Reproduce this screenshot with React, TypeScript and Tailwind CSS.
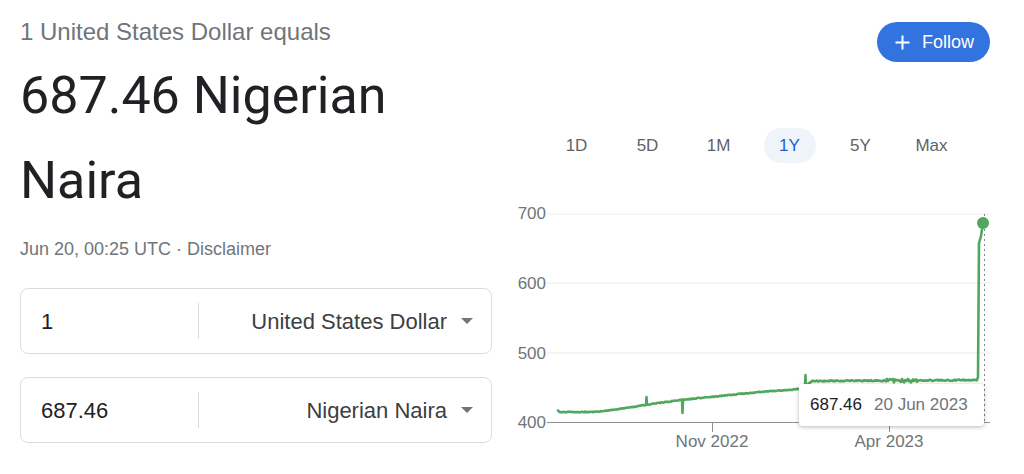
import React from 'react';

const ranges = ['1D', '5D', '1M', '1Y', '5Y', 'Max'];

// chart keypoints, local coords (svg origin = page 500,200)
const keys: [number, number][] = [
  [57, 210],
  [60, 212],
  [95, 212],
  [120, 209],
  [145, 205],
  [180, 200],
  [220, 196],
  [260, 192],
  [300, 189],
  [306, 186],
  [312, 181],
  [477, 180],
];

const spikes: Record<number, number> = { 146: 197, 182: 213, 305: 175 };

const rnd = (i: number) => {
  const s = Math.sin(i * 127.1) * 43758.5453;
  return s - Math.floor(s) - 0.5;
};

const baseY = (x: number) => {
  for (let i = 0; i < keys.length - 1; i++) {
    const [x0, y0] = keys[i];
    const [x1, y1] = keys[i + 1];
    if (x >= x0 && x <= x1) return y0 + ((y1 - y0) * (x - x0)) / (x1 - x0);
  }
  return keys[keys.length - 1][1];
};

const buildPath = () => {
  const pts: string[] = [];
  for (let x = 57; x <= 477; x++) {
    const amp = x > 385 && x < 418 ? 4 : x > 312 ? 1.2 : 0.8;
    const y = baseY(x) + rnd(x) * amp;
    pts.push(`${x},${y.toFixed(1)}`);
    if (spikes[x] !== undefined) {
      pts.push(`${x + 0.5},${spikes[x]}`);
      pts.push(`${x + 1},${baseY(x + 1).toFixed(1)}`);
    }
  }
  pts.push('478,177', '479,43', '481,36', '483,23');
  return 'M' + pts.join(' L');
};

const linePath = buildPath();

const Caret = () => (
  <svg width="14" height="8" viewBox="0 0 14 8" className="shrink-0">
    <path d="M1 1 L7 7 L13 1 Z" fill="#70757a" />
  </svg>
);

const ConvertBox = ({ value, currency, className }: { value: string; currency: string; className?: string }) => (
  <div className={`w-[472px] h-[66px] border border-[#dadce0] rounded-lg flex items-center ${className ?? ''}`}>
    <div className="w-[177px] pl-5 text-[22px] text-[#202124]">{value}</div>
    <div className="w-px h-9 bg-[#dadce0]" />
    <div className="flex-1 flex justify-end items-center gap-[13px] pr-[17px] text-[22px] text-[#3c4043]">
      <span>{currency}</span>
      <Caret />
    </div>
  </div>
);

const Chart = () => (
  <div className="relative mt-[37px] h-[274px] w-[524px]">
    <svg width="524" height="274" viewBox="0 0 524 274" className="block">
      {[14, 83, 153].map((y) => (
        <line key={y} x1="47" x2="490" y1={y} y2={y} stroke="#ececec" strokeWidth="1" />
      ))}
      <line x1="47" x2="490" y1="222.5" y2="222.5" stroke="#8c9196" strokeWidth="1" />
      <line x1="212.5" x2="212.5" y1="223" y2="232" stroke="#8c9196" strokeWidth="1" />
      <line x1="389.5" x2="389.5" y1="223" y2="232" stroke="#8c9196" strokeWidth="1" />
      <g fill="#70757a" fontSize="17" fontFamily="'Liberation Sans', Arial, sans-serif">
        <text x="46" y="19" textAnchor="end">700</text>
        <text x="46" y="89" textAnchor="end">600</text>
        <text x="46" y="159" textAnchor="end">500</text>
        <text x="46" y="228" textAnchor="end">400</text>
        <text x="212" y="247" textAnchor="middle">Nov 2022</text>
        <text x="389" y="247" textAnchor="middle">Apr 2023</text>
      </g>
      <line x1="484.5" x2="484.5" y1="14" y2="223" stroke="#80868b" strokeWidth="1" strokeDasharray="2 3" />
      <path d={linePath} fill="none" stroke="#51a75c" strokeWidth="2.6" strokeLinejoin="round" />
      <circle cx="483" cy="23" r="6" fill="#51a75c" />
    </svg>
    <div className="absolute left-[299px] top-[184px] w-[185px] h-[42px] bg-white rounded-[4px] shadow-[0_1px_4px_rgba(0,0,0,0.28)] flex items-center pl-[11px] gap-[12px] text-[17px]">
      <span className="text-[#202124]">687.46</span>
      <span className="text-[#70757a]">20 Jun 2023</span>
    </div>
  </div>
);

export default function App() {
  return (
    <div className="w-[1024px] h-[474px] bg-white flex overflow-hidden font-['Liberation_Sans',Arial,sans-serif]">
      <div className="w-[500px] shrink-0 pl-5 pt-[18px] flex flex-col">
        <p className="text-[24px] leading-[28px] text-[#70757a]">1 United States Dollar equals</p>
        <h1 className="mt-[7px] max-w-[420px] text-[52px] leading-[85px] text-[#202124] font-['Roboto',sans-serif]">
          687.46 Nigerian Naira
        </h1>
        <p className="mt-[14px] text-[18px] leading-6 text-[#70757a]">Jun 20, 00:25 UTC · Disclaimer</p>
        <ConvertBox className="mt-[27px]" value="1" currency="United States Dollar" />
        <ConvertBox className="mt-[23px]" value="687.46" currency="Nigerian Naira" />
      </div>

      <div className="flex-1 flex flex-col">
        <div className="pt-[22px] flex justify-end pr-[34px]">
          <button className="h-10 w-[113px] rounded-full bg-[#3273e0] flex items-center pl-[17px] gap-[11px] text-white text-[18px]">
            <svg width="17" height="17" viewBox="0 0 17 17">
              <path d="M8.5 1.5v14M1.5 8.5h14" stroke="white" strokeWidth="2" />
            </svg>
            <span>Follow</span>
          </button>
        </div>
        <div className="mt-[66px] flex pl-[41px] h-[35px]">
          {ranges.map((r) => (
            <div key={r} className="w-[71px] flex items-center justify-center">
              {r === '1Y' ? (
                <span className="h-[35px] w-[52px] rounded-full bg-[#eff3fa] flex items-center justify-center text-[17px] text-[#1a5fd6]">
                  {r}
                </span>
              ) : (
                <span className="text-[17px] text-[#5f6368]">{r}</span>
              )}
            </div>
          ))}
        </div>
        <Chart />
      </div>
    </div>
  );
}
